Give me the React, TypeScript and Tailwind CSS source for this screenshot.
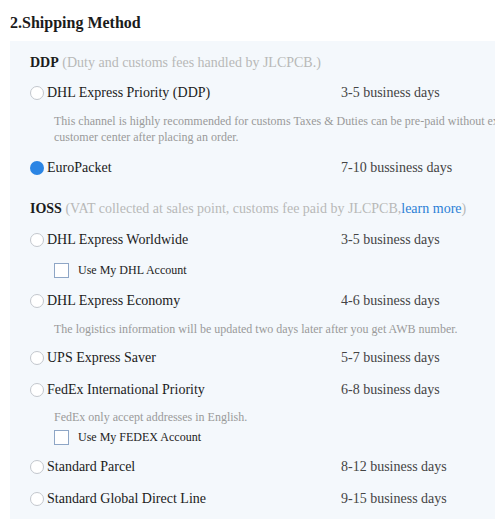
import React from 'react'

const serif = { fontFamily: '"Liberation Serif", "Times New Roman", serif' }

function Radio({ checked }: { checked?: boolean }) {
  return checked ? (
    <span className="block w-[14px] h-[14px] rounded-full bg-[#2b85e4] shrink-0" />
  ) : (
    <span className="block w-[14px] h-[14px] rounded-full border border-[#c3c7cd] bg-white shrink-0" />
  )
}

function Row({ label, days, checked, className = '' }: { label: string; days: string; checked?: boolean; className?: string }) {
  return (
    <div className={`flex items-center h-[32px] ${className}`}>
      <div className="flex items-center gap-[3px] w-[311px]">
        <Radio checked={checked} />
        <span className="text-[14px] text-[#1b1b1b] leading-[20px]">{label}</span>
      </div>
      <span className="text-[14px] text-[#444] leading-[20px] whitespace-nowrap">{days}</span>
    </div>
  )
}

function Note({ children, className = '' }: { children: React.ReactNode; className?: string }) {
  return <div className={`pl-[24px] text-[12px] leading-[16px] text-[#9a9a9a] whitespace-nowrap ${className}`}>{children}</div>
}

function Check({ label, className = '' }: { label: string; className?: string }) {
  return (
    <div className={`flex items-center h-[20px] pl-[24px] ${className}`}>
      <span className="block w-[15px] h-[15px] border border-[#8ea6c6] bg-white shrink-0" />
      <span className="ml-[9px] text-[12px] text-[#222] leading-[16px]">{label}</span>
    </div>
  )
}

export default function App() {
  return (
    <div className="w-[495px] h-[522px] overflow-hidden bg-white" style={serif}>
      <h2 className="pl-[10px] pt-[13px] h-[41px] text-[16px] font-bold text-[#1b1b1b] leading-[20px]">2.Shipping Method</h2>
      <div className="ml-[10px] w-[620px] bg-[#f4f8fc] pl-[20px] pt-[12px] pb-[4px]">
        {/* DDP */}
        <div className="h-[20px] text-[14px] leading-[20px] whitespace-nowrap">
          <span className="font-bold text-[#1b1b1b]">DDP</span>{' '}
          <span className="text-[#b8b8b8]">(Duty and customs fees handled by JLCPCB.)</span>
        </div>
        <Row className="mt-[4px]" label="DHL Express Priority (DDP)" days="3-5 business days" />
        <Note className="mt-[4px]">
          <div>This channel is highly recommended for customs Taxes &amp; Duties can be pre-paid without extra fees in the</div>
          <div>customer center after placing an order.</div>
        </Note>
        <Row className="mt-[7px]" label="EuroPacket" days="7-10 bussiness days" checked />

        {/* IOSS */}
        <div className="mt-[15px] h-[20px] text-[14px] leading-[20px] whitespace-nowrap">
          <span className="font-bold text-[#1b1b1b]">IOSS</span>{' '}
          <span className="text-[#b8b8b8]">(VAT collected at sales point, customs fee paid by JLCPCB,</span>
          <span className="text-[#2b7fd6]">learn more</span>
          <span className="text-[#b8b8b8]">)</span>
        </div>
        <Row className="mt-[5px]" label="DHL Express Worldwide" days="3-5 business days" />
        <Check className="mt-[4px]" label="Use My DHL Account" />
        <Row className="mt-[5px]" label="DHL Express Economy" days="4-6 business days" />
        <Note className="mt-[4px]">The logistics information will be updated two days later after you get AWB number.</Note>
        <Row className="mt-[5px]" label="UPS Express Saver" days="5-7 business days" />
        <Row label="FedEx International Priority" days="6-8 business days" />
        <Note className="mt-[3px]">FedEx only accept addresses in English.</Note>
        <Check className="mt-[2px]" label="Use My FEDEX Account" />
        <Row className="mt-[4px]" label="Standard Parcel" days="8-12 business days" />
        <Row label="Standard Global Direct Line" days="9-15 business days" />
      </div>
    </div>
  )
}
